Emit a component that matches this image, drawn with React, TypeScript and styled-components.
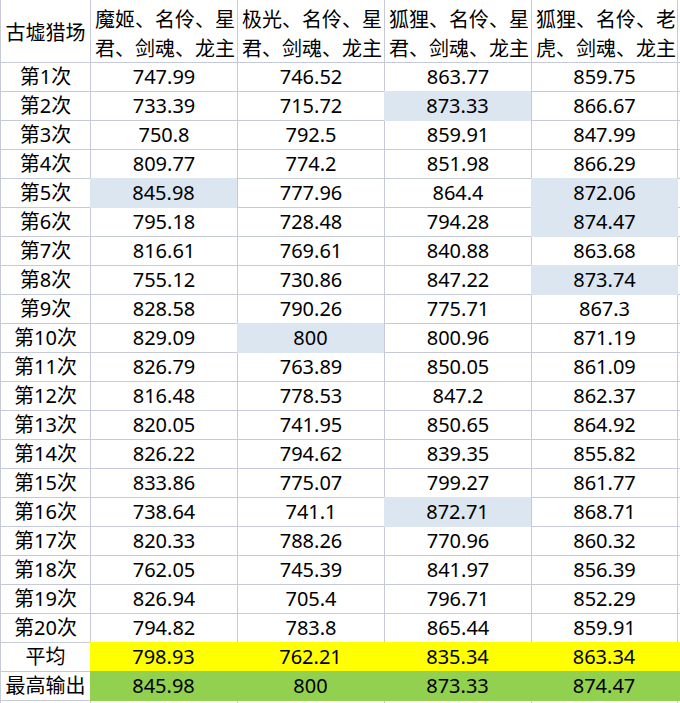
import React from "react";
import styled, { createGlobalStyle, css } from "styled-components";

const GlobalStyle = createGlobalStyle`
  html, body {
    margin: 0;
    padding: 0;
    background: #ffffff;
  }
  body {
    font-family: "Noto Sans", "Noto Sans CJK SC", sans-serif;
    color: #000000;
  }
`;

type Fill = "blue" | "yellow" | "green" | undefined;

const FILLS: Record<string, string> = {
  blue: "#dce6f1",
  yellow: "#ffff00",
  green: "#92d050",
};

const Sheet = styled.div`
  display: grid;
  grid-template-columns: 89px 146px 146px 146px 145px 2px;
  grid-template-rows: 62px repeat(22, 28px) 2px;
  gap: 1px;
  padding-left: 1px;
  width: 680px;
  height: 703px;
  box-sizing: border-box;
  background: #c6cad8;
  overflow: hidden;
`;

const Cell = styled.div<{ $fill?: Fill; $last?: boolean }>`
  background: ${(p) => (p.$fill ? FILLS[p.$fill] : "#ffffff")};
  display: flex;
  align-items: center;
  justify-content: center;
  font-size: 20px;
  line-height: 28px;
  white-space: nowrap;
  overflow: hidden;
  ${(p) =>
    p.$fill &&
    css`
      margin: -1px ${p.$last ? "-1px" : "0"} -1px -1px;
    `}
`;

const HeadCell = styled(Cell)`
  flex-direction: column;
  align-items: flex-start;
  justify-content: center;
  padding: 5px 0 0 4px;
  box-sizing: border-box;
`;

const TitleCell = styled(Cell)`
  padding-top: 4px;
  box-sizing: border-box;
`;

const HeadLine = styled.span`
  display: block;
  line-height: 29px;
`;

const headers = [
  ["魔姬、名伶、星", "君、剑魂、龙主"],
  ["极光、名伶、星", "君、剑魂、龙主"],
  ["狐狸、名伶、星", "君、剑魂、龙主"],
  ["狐狸、名伶、老", "虎、剑魂、龙主"],
];

type Row = { label: string; values: string[]; marks?: number[]; fill?: Fill };

const rows: Row[] = [
  { label: "第1次", values: ["747.99", "746.52", "863.77", "859.75"] },
  { label: "第2次", values: ["733.39", "715.72", "873.33", "866.67"], marks: [2] },
  { label: "第3次", values: ["750.8", "792.5", "859.91", "847.99"] },
  { label: "第4次", values: ["809.77", "774.2", "851.98", "866.29"] },
  { label: "第5次", values: ["845.98", "777.96", "864.4", "872.06"], marks: [0, 3] },
  { label: "第6次", values: ["795.18", "728.48", "794.28", "874.47"], marks: [3] },
  { label: "第7次", values: ["816.61", "769.61", "840.88", "863.68"] },
  { label: "第8次", values: ["755.12", "730.86", "847.22", "873.74"], marks: [3] },
  { label: "第9次", values: ["828.58", "790.26", "775.71", "867.3"] },
  { label: "第10次", values: ["829.09", "800", "800.96", "871.19"], marks: [1] },
  { label: "第11次", values: ["826.79", "763.89", "850.05", "861.09"] },
  { label: "第12次", values: ["816.48", "778.53", "847.2", "862.37"] },
  { label: "第13次", values: ["820.05", "741.95", "850.65", "864.92"] },
  { label: "第14次", values: ["826.22", "794.62", "839.35", "855.82"] },
  { label: "第15次", values: ["833.86", "775.07", "799.27", "861.77"] },
  { label: "第16次", values: ["738.64", "741.1", "872.71", "868.71"], marks: [2] },
  { label: "第17次", values: ["820.33", "788.26", "770.96", "860.32"] },
  { label: "第18次", values: ["762.05", "745.39", "841.97", "856.39"] },
  { label: "第19次", values: ["826.94", "705.4", "796.71", "852.29"] },
  { label: "第20次", values: ["794.82", "783.8", "865.44", "859.91"] },
  { label: "平均", values: ["798.93", "762.21", "835.34", "863.34"], fill: "yellow" },
  { label: "最高输出", values: ["845.98", "800", "873.33", "874.47"], fill: "green" },
];

export default function App() {
  return (
    <>
      <GlobalStyle />
      <Sheet>
        <TitleCell>古墟猎场</TitleCell>
        {headers.map((lines, i) => (
          <HeadCell key={i}>
            {lines.map((l) => (
              <HeadLine key={l}>{l}</HeadLine>
            ))}
          </HeadCell>
        ))}
        <Cell />

        {rows.map((row) => (
          <React.Fragment key={row.label}>
            <Cell>{row.label}</Cell>
            {row.values.map((v, i) => {
              const fill: Fill = row.fill ?? (row.marks?.includes(i) ? "blue" : undefined);
              return (
                <Cell key={i} $fill={fill} $last={i === 3 && !row.fill}>
                  {v}
                </Cell>
              );
            })}
            <Cell $fill={row.fill} />
          </React.Fragment>
        ))}

        {Array.from({ length: 6 }).map((_, i) => (
          <Cell key={"tail" + i} />
        ))}
      </Sheet>
    </>
  );
}
